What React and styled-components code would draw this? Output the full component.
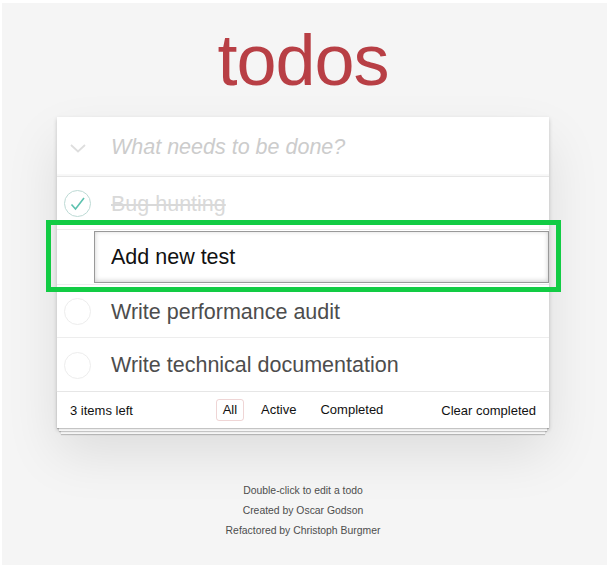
import styled, { createGlobalStyle } from "styled-components";

const GlobalStyle = createGlobalStyle`
  html, body {
    margin: 0;
    padding: 0;
    background: #ffffff;
  }
  body {
    font-family: "Liberation Sans", Arial, sans-serif;
    -webkit-font-smoothing: antialiased;
  }
  * { box-sizing: border-box; }
`;

const todos = [
  { id: 1, title: "Bug hunting", completed: true },
  { id: 2, title: "Add new test", completed: false, editing: true },
  { id: 3, title: "Write performance audit", completed: false },
  { id: 4, title: "Write technical documentation", completed: false },
];

function CheckCircle({ done }) {
  return (
    <Circle $done={done}>
      {done && (
        <svg width="27" height="27" viewBox="0 0 27 27">
          <path d="M7.5 14.5 L11.5 19 L20 8" fill="none" stroke="#5dc2af" strokeWidth="1.6" />
        </svg>
      )}
    </Circle>
  );
}

function TodoItem({ todo }) {
  if (todo.editing) {
    return (
      <EditingRow>
        <EditInput defaultValue={todo.title} />
      </EditingRow>
    );
  }
  return (
    <Row>
      <CheckCircle done={todo.completed} />
      <Label $done={todo.completed}>{todo.title}</Label>
    </Row>
  );
}

export default function App() {
  const left = todos.filter((t) => !t.completed).length;
  return (
    <Page>
      <GlobalStyle />
      <Title>todos</Title>
      <Card>
        <Header>
          <ToggleAll>
            <svg width="16" height="9" viewBox="0 0 16 9">
              <path d="M1 1 L8 7.5 L15 1" fill="none" stroke="#dedede" strokeWidth="1.8" />
            </svg>
          </ToggleAll>
          <NewTodo placeholder="What needs to be done?" />
        </Header>
        <List>
          {todos.map((t) => (
            <TodoItem key={t.id} todo={t} />
          ))}
        </List>
        <Footer>
          <Count>{left} items left</Count>
          <Filters>
            <Filter $selected>All</Filter>
            <Filter>Active</Filter>
            <Filter>Completed</Filter>
          </Filters>
          <Clear>Clear completed</Clear>
        </Footer>
      </Card>
      <Info>
        <p>Double-click to edit a todo</p>
        <p>Created by Oscar Godson</p>
        <p>Refactored by Christoph Burgmer</p>
      </Info>
    </Page>
  );
}

const Page = styled.div`
  margin: 3px 0 0 2px;
  padding-right: 3px;
  min-height: 562px;
  background: #f5f5f5;
  display: flex;
  flex-direction: column;
  align-items: center;
  color: #4d4d4d;
`;

const Title = styled.h1`
  margin: 21px 0 0;
  font-size: 72px;
  line-height: 72px;
  font-weight: normal;
  color: #b83f45;
  text-align: center;
  letter-spacing: -1px;
`;

const Card = styled.section`
  margin-top: 21px;
  width: 492px;
  background: #fff;
  box-shadow: 0 2px 4px 0 rgba(0, 0, 0, 0.2), 0 25px 50px 0 rgba(0, 0, 0, 0.1);
`;

const Header = styled.header`
  height: 59px;
  display: flex;
  align-items: center;
  padding: 1px 0 0 13px;
  box-shadow: inset 0 -2px 1px rgba(0, 0, 0, 0.03);
`;

const ToggleAll = styled.div`
  width: 16px;
  margin-right: 25px;
  display: flex;
  padding-top: 3px;
`;

const NewTodo = styled.input`
  flex: 1;
  border: none;
  outline: none;
  background: transparent;
  font-family: inherit;
  font-size: 21.5px;
  padding: 0;
  color: #4d4d4d;
  &::placeholder {
    font-style: italic;
    color: #cccccc;
  }
`;

const List = styled.ul`
  list-style: none;
  margin: 0;
  padding: 0;
  border-top: 1px solid #e6e6e6;
`;

const Row = styled.li`
  display: flex;
  align-items: center;
  height: 53px;
  padding: 1px 0 0 7px;
  border-bottom: 1px solid #ededed;
  &:last-child {
    border-bottom: none;
  }
`;

const Circle = styled.span`
  width: 27px;
  height: 27px;
  border-radius: 50%;
  border: 1px solid ${(p) => (p.$done ? "#bddad5" : "#ededed")};
  margin-right: 20px;
  flex-shrink: 0;
  position: relative;
  & svg {
    position: absolute;
    top: -1px;
    left: -1px;
  }
`;

const Label = styled.span`
  font-size: 21.5px;
  line-height: 26px;
  color: ${(p) => (p.$done ? "#d9d9d9" : "#4d4d4d")};
  text-decoration: ${(p) => (p.$done ? "line-through" : "none")};
`;

const EditingRow = styled.li`
  position: relative;
  height: 55px;
  padding: 1px 0 2px 37px;
  border-bottom: 1px solid #ededed;
  &::after {
    content: "";
    position: absolute;
    top: -10px;
    bottom: -8px;
    left: -11px;
    right: -12px;
    border: 5px solid #12cc44;
    pointer-events: none;
  }
`;

const EditInput = styled.input`
  display: block;
  width: 100%;
  height: 52px;
  margin: 0;
  padding: 12px 16px;
  border: 1px solid #999;
  outline: none;
  box-shadow: inset 0 -1px 5px 0 rgba(0, 0, 0, 0.2);
  font-family: inherit;
  font-size: 21.5px;
  color: #111;
  background: #fff;
`;

const Footer = styled.footer`
  position: relative;
  height: 37px;
  padding: 0 13px;
  border-top: 1px solid #e6e6e6;
  display: grid;
  grid-template-columns: 1fr auto 1fr;
  align-items: center;
  font-size: 13px;
  color: #111;
  &::before {
    content: "";
    position: absolute;
    left: 0;
    right: 0;
    bottom: 0;
    height: 37px;
    box-shadow: 0 1px 1px rgba(0, 0, 0, 0.2), 0 5px 0 -2px #f6f6f6,
      0 6px 1px -2px rgba(0, 0, 0, 0.2), 0 10px 0 -4px #f6f6f6,
      0 11px 1px -4px rgba(0, 0, 0, 0.2);
    pointer-events: none;
  }
`;

const Count = styled.span`
  justify-self: start;
`;

const Filters = styled.div`
  display: flex;
  gap: 10px;
`;

const Filter = styled.a`
  display: block;
  padding: 3px 6px;
  line-height: 14px;
  border: 1px solid ${(p) => (p.$selected ? "rgba(175, 47, 47, 0.2)" : "transparent")};
  border-radius: 3px;
  color: inherit;
  cursor: pointer;
`;

const Clear = styled.span`
  justify-self: end;
`;

const Info = styled.div`
  margin-top: 58px;
  display: flex;
  flex-direction: column;
  align-items: center;
  gap: 10px;
  font-size: 10.4px;
  color: #4d4d4d;
  & p {
    margin: 0;
    line-height: 10px;
  }
`;
